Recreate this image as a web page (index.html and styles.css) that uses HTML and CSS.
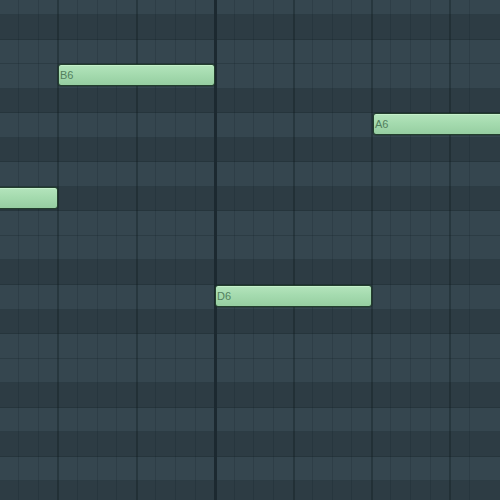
FILE: index.html
```html
<!DOCTYPE html>
<html>
<head>
<meta charset="utf-8">
<link rel="stylesheet" href="styles.css">
</head>
<body>
<div class="roll">
  <div class="rows">
    <div class="row w"></div>
    <div class="row b"></div>
    <div class="row w"></div>
    <div class="row w"></div>
    <div class="row b"></div>
    <div class="row w"></div>
    <div class="row b"></div>
    <div class="row w"></div>
    <div class="row b"></div>
    <div class="row w"></div>
    <div class="row w"></div>
    <div class="row b"></div>
    <div class="row w"></div>
    <div class="row b"></div>
    <div class="row w"></div>
    <div class="row w"></div>
    <div class="row b"></div>
    <div class="row w"></div>
    <div class="row b"></div>
    <div class="row w"></div>
    <div class="row b"></div>
  </div>
  <div class="cols">
    <div class="col beat"></div><div class="col"></div><div class="col"></div><div class="col"></div>
    <div class="col beat"></div><div class="col"></div><div class="col"></div><div class="col"></div>
    <div class="col beat"></div><div class="col"></div><div class="col"></div><div class="col"></div>
    <div class="col bar"></div><div class="col"></div><div class="col"></div><div class="col"></div>
    <div class="col beat"></div><div class="col"></div><div class="col"></div><div class="col"></div>
    <div class="col beat"></div><div class="col"></div><div class="col"></div><div class="col"></div>
    <div class="col beat"></div><div class="col"></div>
  </div>
  <div class="note n-b6">B6</div>
  <div class="note n-a6">A6</div>
  <div class="note n-fs6"></div>
  <div class="note n-d6">D6</div>
</div>
</body>
</html>
```
FILE: styles.css
```css
html, body {
  margin: 0;
  padding: 0;
  background: #2d3c44;
}
.roll {
  position: relative;
  width: 500px;
  height: 500px;
  overflow: hidden;
  font-family: "Liberation Sans", Arial, sans-serif;
}
.rows {
  display: flex;
  flex-direction: column;
  margin-top: -9.6px;
}
.row {
  height: 24.56px;
  box-sizing: border-box;
  flex: none;
  border-bottom: 1px solid rgba(20,30,36,0.25);
}
.row.w {
  background-color: #35464f;
}
.row.b {
  background-color: #2d3c44;
}
.cols {
  position: absolute;
  top: 0;
  left: -21px;
  height: 500px;
  display: flex;
}
.col {
  flex: none;
  width: 19.6px;
  box-sizing: border-box;
  border-left: 1px solid rgba(15,25,30,0.16);
}
.col.beat {
  border-left: 2px solid rgba(15,25,30,0.34);
}
.col.bar {
  border-left: 3px solid #1c2930;
}
.note {
  position: absolute;
  height: 22px;
  box-sizing: border-box;
  border: 1px solid #233f2e;
  border-radius: 3px;
  background: linear-gradient(to bottom, #b4e4bc 0%, #a5dbaf 45%, #96cea1 100%);
  box-shadow: inset 0 1px 0 rgba(220,255,225,0.45), 0 0 0 0.5px rgba(20,40,28,0.5);
  color: #527f5d;
  font-size: 11px;
  line-height: 20px;
  padding-left: 1px;
  white-space: nowrap;
  overflow: hidden;
}
.n-b6 { left: 58px; top: 64px; width: 157px; }
.n-a6 { left: 373px; top: 113px; width: 140px; }
.n-fs6 { left: -6px; top: 187px; width: 64px; }
.n-d6 { left: 215px; top: 285px; width: 157px; }
```
